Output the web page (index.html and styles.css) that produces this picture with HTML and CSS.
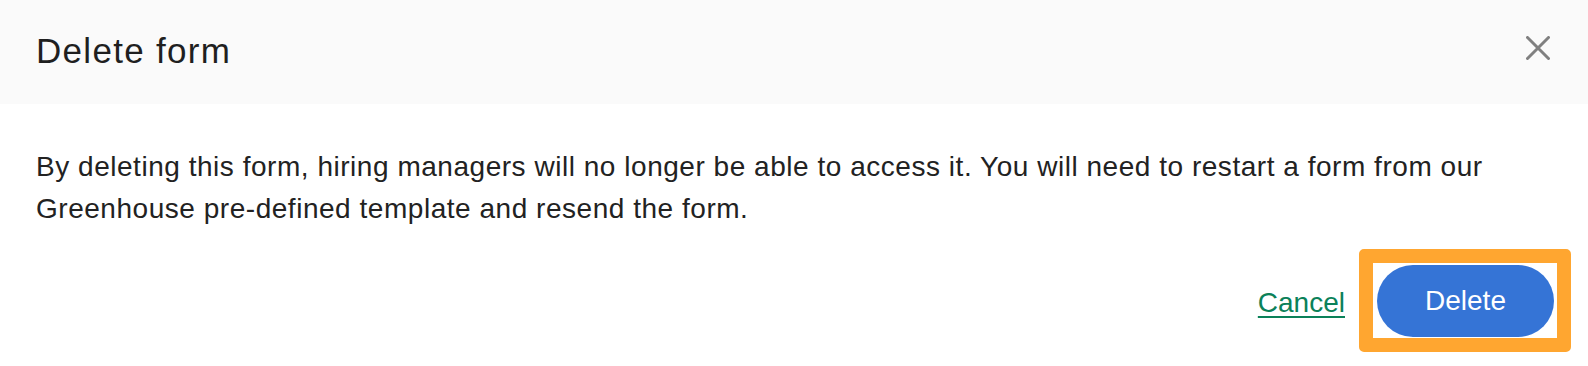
FILE: index.html
```html
<!DOCTYPE html>
<html lang="en">
<head>
<meta charset="utf-8">
<title>Delete form</title>
<link rel="stylesheet" href="styles.css">
</head>
<body>
<div class="modal">
  <header class="modal-header">
    <h1 class="modal-title">Delete form</h1>
    <button class="close-btn" aria-label="Close">
      <svg width="24" height="24" viewBox="0 0 24 24" aria-hidden="true">
        <path d="M1.5 1.5 L22.5 22.5 M22.5 1.5 L1.5 22.5" stroke="#808080" stroke-width="3" stroke-linecap="round" fill="none"/>
      </svg>
    </button>
  </header>
  <div class="modal-body">
    <p class="message">By deleting this form, hiring managers will no longer be able to access it. You will need to restart a form from our Greenhouse pre-defined template and resend the form.</p>
  </div>
  <footer class="modal-footer">
    <a class="cancel-link" href="#">Cancel</a>
    <div class="highlight">
      <button class="delete-btn">Delete</button>
    </div>
  </footer>
</div>
</body>
</html>
```

FILE: styles.css
```css
* { box-sizing: border-box; }
html, body { margin: 0; padding: 0; background: #ffffff; }
body {
  font-family: "Liberation Sans", Arial, sans-serif;
  color: #222222;
  width: 1588px;
  height: 366px;
  overflow: hidden;
}
.modal { width: 1588px; }
.modal-header {
  height: 104px;
  background: #fafafa;
  display: flex;
  align-items: center;
  justify-content: space-between;
  padding: 0 38px 0 36px;
}
.modal-title {
  margin: 0;
  font-size: 35px;
  font-weight: 400;
  letter-spacing: 1.3px;
  line-height: 40px;
  color: #1f1f1f;
  position: relative;
  top: -1px;
}
.close-btn {
  border: 0;
  background: transparent;
  padding: 0;
  width: 24px;
  height: 24px;
  display: flex;
  cursor: pointer;
  margin-top: -8px;
}
.modal-body { padding: 42px 36px 0 36px; }
.message {
  margin: 0;
  font-size: 28px;
  line-height: 42px;
  letter-spacing: 0.53px;
  color: #222222;
}
.modal-footer {
  display: flex;
  justify-content: flex-end;
  align-items: center;
  gap: 14px;
  padding: 19px 17px 0 36px;
}
.cancel-link {
  font-size: 28px;
  color: #0b8159;
  text-decoration: underline;
  text-decoration-thickness: 2px;
  text-underline-offset: 4px;
  margin-top: 4px;
}
.highlight {
  border: 14px solid #ffa630;
  border-radius: 5px;
  padding: 2px 3px 1px 4px;
  background: #ffffff;
  display: flex;
}
.delete-btn {
  width: 177px;
  height: 72px;
  border: 0;
  border-radius: 36px;
  background: #3574d6;
  color: #ffffff;
  font-family: "Liberation Sans", Arial, sans-serif;
  font-size: 28px;
  padding: 0;
  cursor: pointer;
}
```
